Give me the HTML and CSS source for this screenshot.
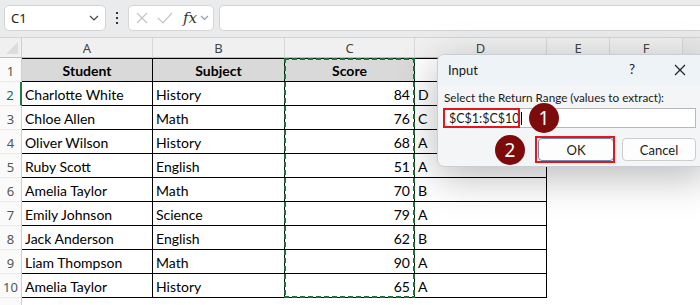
FILE: index.html
```html
<!DOCTYPE html>
<html>
<head>
<meta charset="utf-8">
<link rel="stylesheet" href="styles.css">
</head>
<body>
<div class="app">
  <div class="toolbar">
    <div class="namebox">
      <span class="nb-text">C1</span>
      <svg class="chev" width="10" height="6" viewBox="0 0 10 6"><path d="M1 1 L5 5 L9 1" fill="none" stroke="#444" stroke-width="1.2"/></svg>
    </div>
    <div class="kebab"><i></i><i></i><i></i></div>
    <div class="fxbox">
      <svg width="14" height="14" viewBox="0 0 14 14"><path d="M2 2 L12 12 M12 2 L2 12" stroke="#c4c4c4" stroke-width="1.2" fill="none"/></svg>
      <svg width="16" height="14" viewBox="0 0 16 14"><path d="M1 7 L6 12 L15 2" stroke="#c4c4c4" stroke-width="1.2" fill="none"/></svg>
      <span class="fx">fx</span>
      <svg width="9" height="6" viewBox="0 0 9 6"><path d="M1 1 L4.5 4.5 L8 1" fill="none" stroke="#9a9a9a" stroke-width="1.1"/></svg>
    </div>
    <div class="formula"></div>
  </div>

  <div class="sheet">
    <div class="grid">
      <div class="corner"><span class="tri"></span></div>
      <div class="ch">A</div><div class="ch">B</div><div class="ch">C</div><div class="ch">D</div><div class="ch">E</div><div class="ch">F</div><div class="ch last"></div>

      <div class="rh first">1</div>
      <div class="c hd bt">Student</div><div class="c hd bt">Subject</div><div class="c hd bt">Score</div><div class="c d bt"></div><div class="c e"></div><div class="c e"></div><div class="c e"></div>

      <div class="rh act">2</div>
      <div class="c b">Charlotte White</div><div class="c b">History</div><div class="c b num">84</div><div class="c b">D</div><div class="c e"></div><div class="c e"></div><div class="c e"></div>

      <div class="rh">3</div>
      <div class="c b">Chloe Allen</div><div class="c b">Math</div><div class="c b num">76</div><div class="c b">C</div><div class="c e"></div><div class="c e"></div><div class="c e"></div>

      <div class="rh">4</div>
      <div class="c b">Oliver Wilson</div><div class="c b">History</div><div class="c b num">68</div><div class="c b">A</div><div class="c e"></div><div class="c e"></div><div class="c e"></div>

      <div class="rh">5</div>
      <div class="c b">Ruby Scott</div><div class="c b">English</div><div class="c b num">51</div><div class="c b">A</div><div class="c e"></div><div class="c e"></div><div class="c e"></div>

      <div class="rh">6</div>
      <div class="c b">Amelia Taylor</div><div class="c b">Math</div><div class="c b num">70</div><div class="c b">B</div><div class="c e"></div><div class="c e"></div><div class="c e"></div>

      <div class="rh">7</div>
      <div class="c b">Emily Johnson</div><div class="c b">Science</div><div class="c b num">79</div><div class="c b">A</div><div class="c e"></div><div class="c e"></div><div class="c e"></div>

      <div class="rh">8</div>
      <div class="c b">Jack Anderson</div><div class="c b">English</div><div class="c b num">62</div><div class="c b">B</div><div class="c e"></div><div class="c e"></div><div class="c e"></div>

      <div class="rh">9</div>
      <div class="c b">Liam Thompson</div><div class="c b">Math</div><div class="c b num">90</div><div class="c b">A</div><div class="c e"></div><div class="c e"></div><div class="c e"></div>

      <div class="rh">10</div>
      <div class="c b">Amelia Taylor</div><div class="c b">History</div><div class="c b num">65</div><div class="c b">A</div><div class="c e"></div><div class="c e"></div><div class="c e"></div>

      <div class="rh"></div>
      <div class="c e"></div><div class="c e"></div><div class="c e"></div><div class="c e"></div><div class="c e"></div><div class="c e"></div><div class="c e"></div>
    </div>
    <div class="marquee"></div>
  </div>

  <div class="dialog">
    <div class="dtitle">
      <span class="dname">Input</span>
      <span class="help">?</span>
      <svg class="close" width="12" height="12" viewBox="0 0 12 12"><path d="M1 1 L11 11 M11 1 L1 11" stroke="#222" stroke-width="1.2" fill="none"/></svg>
    </div>
    <div class="dbody">
      <div class="dlabel">Select the Return Range (values to extract):</div>
      <div class="dinput"><span class="dval">$C$1:$C$10</span><span class="caret"></span></div>
      <div class="dbuttons">
        <div class="btn ok">OK</div>
        <div class="btn">Cancel</div>
      </div>
    </div>
  </div>
  <div class="hl hl-input"></div>
  <div class="hl hl-ok"></div>
  <div class="badge b1">1</div>
  <div class="badge b2">2</div>
</div>
</body>
</html>
```

FILE: styles.css
```css
* { box-sizing: border-box; }
html, body { margin: 0; padding: 0; }
body { width: 700px; height: 305px; overflow: hidden; background: #fff; font-family: "Lato", "Noto Sans", sans-serif; }
.app { position: relative; width: 700px; height: 305px; overflow: hidden; }

.toolbar {
  height: 38px; background: #eaebec; border-bottom: 1px solid #d4d4d4;
  display: flex; align-items: flex-start; padding: 5px 0 0 4px;
}
.namebox {
  width: 102px; height: 26px; background: #fff; border: 1px solid #d3d3d3; border-radius: 5px;
  display: flex; align-items: center; justify-content: space-between; padding: 0 6px 0 6px;
  font-family: "Segoe UI", "Noto Sans", sans-serif; font-size: 13px; color: #222;
}
.kebab { width: 22px; height: 26px; display: flex; flex-direction: column; align-items: center; justify-content: center; gap: 3px; }
.kebab i { display: block; width: 2px; height: 2px; background: #333; }
.fxbox {
  width: 86px; height: 26px; background: #fff; border: 1px solid #d6d6d6; border-radius: 5px;
  display: flex; align-items: center; gap: 8px; padding: 0 0 0 6px;
}
.fx { font-family: "DejaVu Serif", "Liberation Serif", serif; font-style: italic; font-size: 15px; color: #333; margin-left: 2px; margin-right: -5px; }
.formula { flex: 1; height: 26px; margin-left: 5px; background: #fff; border: 1px solid #d3d3d3; border-right: none; border-radius: 5px 0 0 5px; }

.sheet { position: relative; }
.grid {
  display: grid;
  grid-template-columns: 22px 131px 132px 130px 132px 63px 73px 1fr;
  grid-template-rows: 20px 24px repeat(9, 24px) 24px;
}
.corner { background: #f0f0f0; border-right: 1px solid #cfcfcf; border-bottom: 1px solid #bdbdbd; position: relative; }
.tri { position: absolute; right: 3px; bottom: 3px; width: 0; height: 0; border-left: 12px solid transparent; border-bottom: 12px solid #dcdcdc; }
.ch {
  background: #f0f0f0; border-right: 1px solid #d8d8d8; border-bottom: 1px solid #bdbdbd;
  font-family: "Segoe UI", "Noto Sans", sans-serif; font-size: 13px; color: #444;
  display: flex; align-items: center; justify-content: center; padding-top: 1px;
}
.ch.last { border-right: none; background: #e8e8e8; }
.rh {
  border-right: 1px solid #cfcfcf; border-bottom: 1px solid #ebebeb; background: #fafafa;
  font-family: "Segoe UI", "Noto Sans", sans-serif; font-size: 13px; color: #555;
  display: flex; align-items: flex-end; justify-content: center; padding-bottom: 1px;
}
.rh.act { color: #1d6b3f; border-right: 2px solid #1f7a46; }
.c { font-size: 14px; color: #000; display: flex; align-items: center; padding: 1px 3px 0 3px; white-space: nowrap; }
.c.b { border-right: 1px solid #000; border-bottom: 1px solid #000; }
.c.hd { background: #d9d9d9; font-weight: 700; justify-content: center; border-right: 1px solid #000; border-bottom: 1px solid #000; }
.c.bt { border-top: 1px solid #000; }
.c.d { border-right: 1px solid #000; border-bottom: 1px solid #000; }
.c.num { justify-content: flex-end; padding-right: 4px; }

.marquee {
  position: absolute; left: 284px; top: 20px; width: 131px; height: 240px;
  background:
    repeating-linear-gradient(90deg, #1e6e3e 0 5px, transparent 5px 8px) left top / 100% 2px no-repeat,
    repeating-linear-gradient(90deg, #1e6e3e 0 5px, transparent 5px 8px) left bottom / 100% 2px no-repeat,
    repeating-linear-gradient(180deg, #1e6e3e 0 5px, transparent 5px 8px) left top / 2px 100% no-repeat,
    repeating-linear-gradient(180deg, #1e6e3e 0 5px, transparent 5px 8px) right top / 2px 100% no-repeat;
}

.dialog {
  position: absolute; left: 437px; top: 54px; width: 272px; height: 113px;
  background: #f3f5f7; border: 1px solid #c9cfd4; border-radius: 7px;
  box-shadow: 0 10px 40px rgba(0,0,0,0.28);
  font-family: "Segoe UI", "Lato", sans-serif; color: #1a1a1a;
  overflow: hidden;
}
.dtitle { height: 30px; background: #edf3f7; display: flex; align-items: center; padding-left: 10px; position: relative; }
.dname { font-size: 13px; }
.help { position: absolute; left: 191px; top: 6px; font-size: 13.5px; }
.close { position: absolute; left: 236px; top: 9px; }
.dbody { padding: 4px 0 0 6px; }
.dlabel { font-size: 11.7px; height: 16px; line-height: 16px; margin-bottom: 3px; }
.dinput { height: 20px; width: 252px; background: #fff; border: 1px solid #b8b8b8; display: flex; align-items: center; padding-left: 4px; font-size: 12.5px; }
.caret { display: inline-block; width: 1px; height: 13px; background: #000; margin-left: 1px; }
.dbuttons { display: flex; justify-content: flex-start; gap: 8px; margin-top: 10px; padding-left: 94px; }
.btn { width: 74px; height: 23px; background: #fdfdfd; border: 1px solid #cdcdcd; border-radius: 4px; display: flex; align-items: center; justify-content: center; font-size: 13px; }
.btn.ok { width: 76px; border: 1px solid #6a8bb8; }

.hl { position: absolute; border: 2px solid #e8141b; }
.hl-input { left: 443px; top: 108px; width: 77px; height: 20px; }
.hl-ok { left: 535px; top: 136px; width: 80px; height: 27px; }

.badge {
  position: absolute; width: 30px; height: 30px; border-radius: 50%; background: #7e0b0b;
  color: #fff; font-family: "Segoe UI", "Noto Sans", sans-serif; font-size: 19px;
  display: flex; align-items: center; justify-content: center;
}
.b1 { left: 529px; top: 103px; }
.b2 { left: 495px; top: 135px; }
```
